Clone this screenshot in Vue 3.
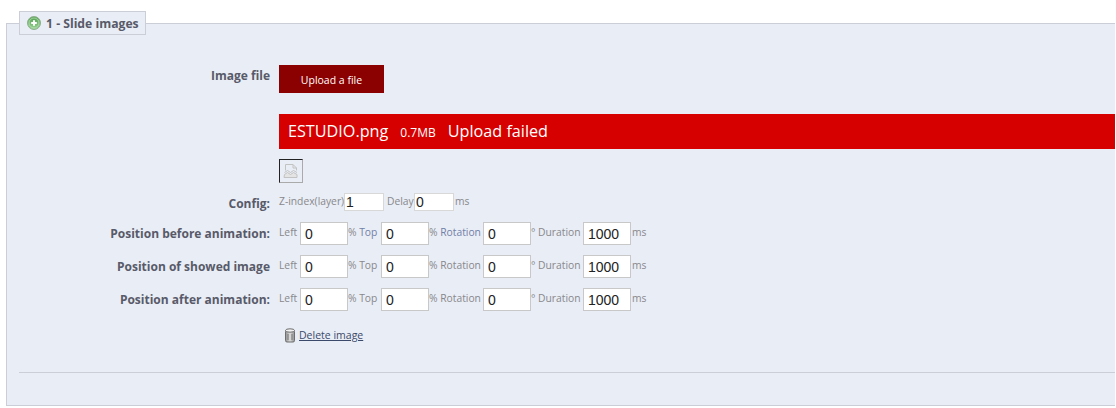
<template>
  <div class="page">
    <fieldset class="panel">
      <legend class="panel-title">
        <svg class="plus" width="14" height="14" viewBox="0 0 14 14">
          <defs>
            <linearGradient id="plusFill" x1="0" y1="0" x2="0" y2="1">
              <stop offset="0" stop-color="#4f9e4d" />
              <stop offset="1" stop-color="#9bd596" />
            </linearGradient>
          </defs>
          <circle cx="7" cy="7" r="6.5" fill="url(#plusFill)" stroke="#8fb08e" stroke-width="1" />
          <circle cx="7" cy="7" r="5" fill="none" stroke="#b6dcb3" stroke-width="0.8" />
          <path d="M7 4.2v5.6M4.2 7h5.6" stroke="#fff" stroke-width="2" />
        </svg>
        1 - Slide images
      </legend>

      <div class="row row-upload">
        <label class="row-label label-upload">Image file</label>
        <button class="upload-btn" type="button">Upload a file</button>
      </div>

      <div class="failed-bar">
        <span>ESTUDIO.png</span>
        <span class="size">0.7MB</span>
        <span>Upload failed</span>
      </div>

      <div class="thumb">
        <svg width="16" height="16" viewBox="0 0 16 16" fill="none" stroke="#c2c2c2" stroke-width="1">
          <path d="M2.5 7.5V1.5h7.5l3.5 3.5v2.5" />
          <path d="M10 1.5v3.5h3.5" />
          <path d="M1.5 9.5l3-2 3 2 3-2 3.5 2" />
          <path d="M1.5 11.5l3-2 3 2 3-2 3.5 2v3h-13z" fill="#e4e4e4" />
        </svg>
      </div>

      <div class="row row-config">
        <label class="row-label">Config:</label>
        <div class="fields">
          <span class="hint w-z">Z-index(layer)</span>
          <input class="small-input" value="1">
          <span class="hint delay">Delay</span>
          <input class="small-input" value="0">
          <span class="hint ms">ms</span>
        </div>
      </div>

      <div v-for="pos in positions" :key="pos.label" class="row row-pos">
        <label class="row-label">{{ pos.label }}</label>
        <div class="fields">
          <span class="hint w-left">Left</span>
          <input class="pos-input" value="0">
          <span class="hint w-top">% <span :class="{ blue: pos.blue }">Top</span></span>
          <input class="pos-input" value="0">
          <span class="hint w-rot">% <span :class="{ blue: pos.blue }">Rotation</span></span>
          <input class="pos-input" value="0">
          <span class="hint w-dur">° Duration</span>
          <input class="pos-input" value="1000">
          <span class="hint ms">ms</span>
        </div>
      </div>

      <div class="delete-row">
        <svg width="12" height="15" viewBox="0 0 12 15">
          <defs>
            <linearGradient id="binFill" x1="0" y1="0" x2="1" y2="0">
              <stop offset="0" stop-color="#8f8f8f" />
              <stop offset="0.5" stop-color="#dedede" />
              <stop offset="1" stop-color="#8f8f8f" />
            </linearGradient>
          </defs>
          <rect x="1.5" y="2" width="9" height="12" rx="1.5" fill="url(#binFill)" stroke="#6e6e6e" />
          <ellipse cx="6" cy="2.5" rx="4.5" ry="1.7" fill="#f2f2f2" stroke="#6e6e6e" />
          <path d="M4 6v6M8 6v6" stroke="#777" stroke-width="1" />
        </svg>
        <a class="delete-link" href="#">Delete image</a>
      </div>

      <hr class="divider">
    </fieldset>
  </div>
</template>

<script setup>
const positions = [
  { label: 'Position before animation:', blue: true },
  { label: 'Position of showed image', blue: false },
  { label: 'Position after animation:', blue: false },
]
</script>

<style>
html, body {
  background: #fff;
}
</style>

<style scoped>
.page {
  width: 1116px;
  height: 408px;
  padding: 11px 1px 0 6px;
  box-sizing: border-box;
  overflow: hidden;
  font-family: "Open Sans", sans-serif;
}

.panel {
  margin: 0;
  padding: 0;
  height: 395px;
  box-sizing: border-box;
  border: 1px solid #ccced7;
  border-right: 0;
  background: #e9edf5;
  min-width: 0;
}

.panel-title {
  margin-left: 12px;
  padding: 0 0 0 7px;
  height: 24px;
  width: 127px;
  box-sizing: border-box;
  display: flex;
  align-items: center;
  gap: 5px;
  border: 1px solid #ccced7;
  background: #e9edf5;
  color: #585a69;
  font-size: 12.2px;
  font-weight: 700;
  white-space: nowrap;
}

.plus {
  flex: none;
}

.row {
  display: flex;
  align-items: center;
}

.row-label {
  width: 263px;
  flex: none;
  text-align: right;
  color: #585a69;
  font-size: 12px;
  font-weight: 700;
  white-space: nowrap;
}

.row-upload {
  margin-top: 30px;
  align-items: flex-start;
}

.label-upload {
  padding-top: 1px;
  line-height: 20px;
}

.upload-btn {
  margin-left: 9px;
  width: 105px;
  height: 28px;
  padding: 1px 0 0;
  border: 0;
  background: #8b0000;
  color: #fff;
  font-family: "Open Sans", sans-serif;
  font-size: 10.5px;
}

.failed-bar {
  margin: 21px 0 0 272px;
  height: 35px;
  padding: 0 0 1px 9px;
  box-sizing: border-box;
  display: flex;
  align-items: center;
  gap: 12px;
  background: #d70000;
  color: #fff;
  font-size: 16.2px;
}

.size {
  font-size: 12px;
  padding-top: 2px;
}

.thumb {
  margin: 10px 0 0 272px;
  width: 24px;
  height: 24px;
  box-sizing: border-box;
  display: flex;
  align-items: center;
  justify-content: center;
  border: 1px solid #aaa;
  border-top-color: #222;
  border-left-color: #222;
}

.row-config {
  margin-top: 10px;
  height: 18px;
}

.row-config .row-label {
  padding-top: 2px;
}

.row-pos {
  height: 23px;
  margin-top: 10px;
}

.row-config + .row-pos,
.row-pos:last-of-type {
  margin-top: 11px;
}

.fields {
  display: flex;
  align-items: center;
  margin-left: 9px;
}

.hint {
  color: #88888c;
  font-size: 10.3px;
  white-space: nowrap;
  padding-bottom: 3px;
}

.blue {
  color: #7280a8;
}

.w-z {
  width: 65px;
}

.delay {
  box-sizing: border-box;
  width: 30px;
  padding-left: 3px;
}

.ms {
  margin-left: 1px;
}

.small-input,
.pos-input {
  box-sizing: border-box;
  background: #fff;
  color: #222;
  font-family: "Liberation Sans", Arial, sans-serif;
  font-size: 14px;
  outline: none;
}

.small-input {
  width: 40px;
  height: 18px;
  padding: 0 0 0 1px;
  border: 1px solid #d8d8d8;
}

.pos-input {
  width: 48px;
  height: 23px;
  padding: 0 0 0 4px;
  border: 1px solid #c8c8c8;
}

.w-left {
  width: 21px;
}

.w-top {
  width: 33px;
}

.w-rot {
  width: 54px;
}

.w-dur {
  width: 52px;
}

.delete-row {
  margin: 15px 0 0 277px;
  height: 18px;
  display: flex;
  align-items: center;
  gap: 3px;
}

.delete-link {
  color: #3b4a6b;
  font-size: 10.5px;
  text-decoration: underline;
}

.divider {
  margin: 28px 0 0 12px;
  border: 0;
  border-top: 1px solid #ccced7;
}
</style>
